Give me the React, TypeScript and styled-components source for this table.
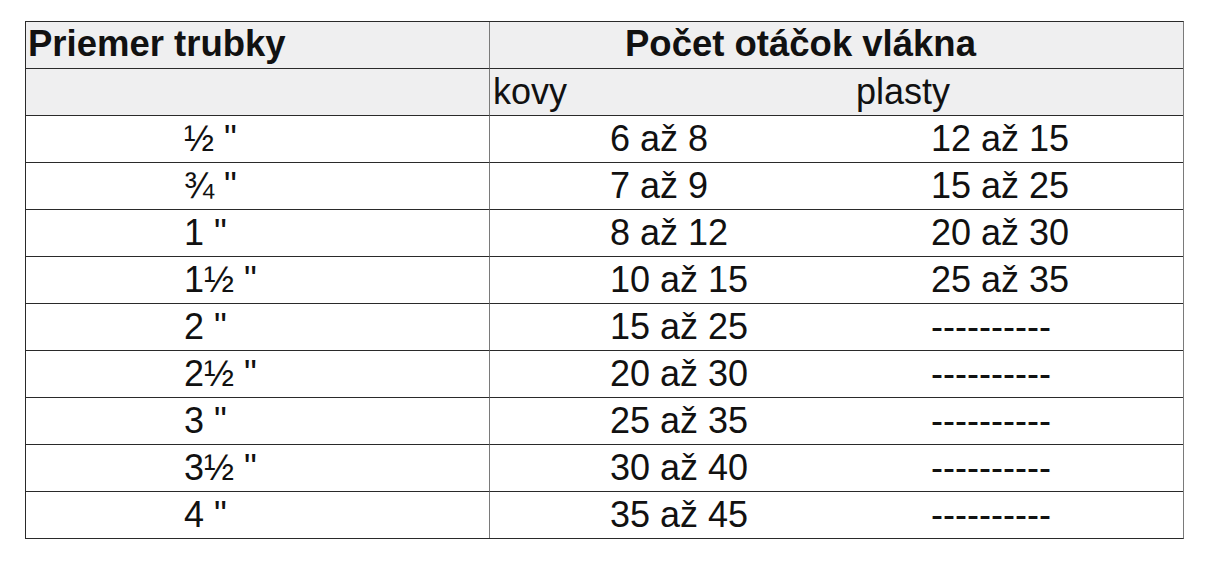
import React from "react";
import styled, { createGlobalStyle } from "styled-components";

const Global = createGlobalStyle`
  html, body { margin: 0; padding: 0; background: #ffffff; }
  body { font-family: "Liberation Sans", Arial, sans-serif; color: #111; }
`;

const Page = styled.div`
  padding: 21px 0 0 25px;
`;

const Table = styled.div`
  display: grid;
  grid-template-columns: 464px 693px;
  width: max-content;
  border-top: 1px solid #2a2a2a;
  border-left: 1px solid #2a2a2a;
  border-bottom: 1px solid #2a2a2a;
  border-right: 1px solid #7a7a7a;
`;

const Cell = styled.div<{ $head?: boolean; $left?: boolean; $last?: boolean; $bold?: boolean; $pad?: number }>`
  box-sizing: border-box;
  height: ${(p) => (p.$last ? 46 : 47)}px;
  border-bottom: ${(p) => (p.$last ? "none" : "1px solid #2a2a2a")};
  border-right: ${(p) => (p.$left ? "1px solid #7a7a7a" : "none")};
  background: ${(p) => (p.$head ? "#efeff0" : "#ffffff")};
  display: flex;
  align-items: center;
  padding-left: ${(p) => p.$pad ?? 0}px;
  padding-bottom: 1px;
  font-size: ${(p) => (p.$bold ? 36.5 : 36)}px;
  font-weight: ${(p) => (p.$bold ? 700 : 400)};
  line-height: 1;
  white-space: pre;
`;

const Sub = styled.span<{ $w?: number }>`
  display: inline-block;
  width: ${(p) => (p.$w ? `${p.$w}px` : "auto")};
`;

const rows: [string, string, string][] = [
  ["½ \"", "6 až 8", "12 až 15"],
  ["¾ \"", "7 až 9", "15 až 25"],
  ["1 \"", "8 až 12", "20 až 30"],
  ["1½ \"", "10 až 15", "25 až 35"],
  ["2 \"", "15 až 25", "----------"],
  ["2½ \"", "20 až 30", "----------"],
  ["3 \"", "25 až 35", "----------"],
  ["3½ \"", "30 až 40", "----------"],
  ["4 \"", "35 až 45", "----------"],
];

export default function App() {
  return (
    <>
      <Global />
      <Page>
        <Table>
          <Cell $head $left $bold $pad={2}>Priemer trubky</Cell>
          <Cell $head $bold $pad={135}>Počet otáčok vlákna</Cell>
          <Cell $head $left />
          <Cell $head $pad={3}>
            <Sub $w={363}>kovy</Sub>
            <Sub>plasty</Sub>
          </Cell>
          {rows.map((r, i) => {
            const last = i === rows.length - 1;
            return (
              <React.Fragment key={i}>
                <Cell $left $last={last} $pad={158}>{r[0]}</Cell>
                <Cell $last={last} $pad={120}>
                  <Sub $w={321}>{r[1]}</Sub>
                  <Sub>{r[2]}</Sub>
                </Cell>
              </React.Fragment>
            );
          })}
        </Table>
      </Page>
    </>
  );
}
